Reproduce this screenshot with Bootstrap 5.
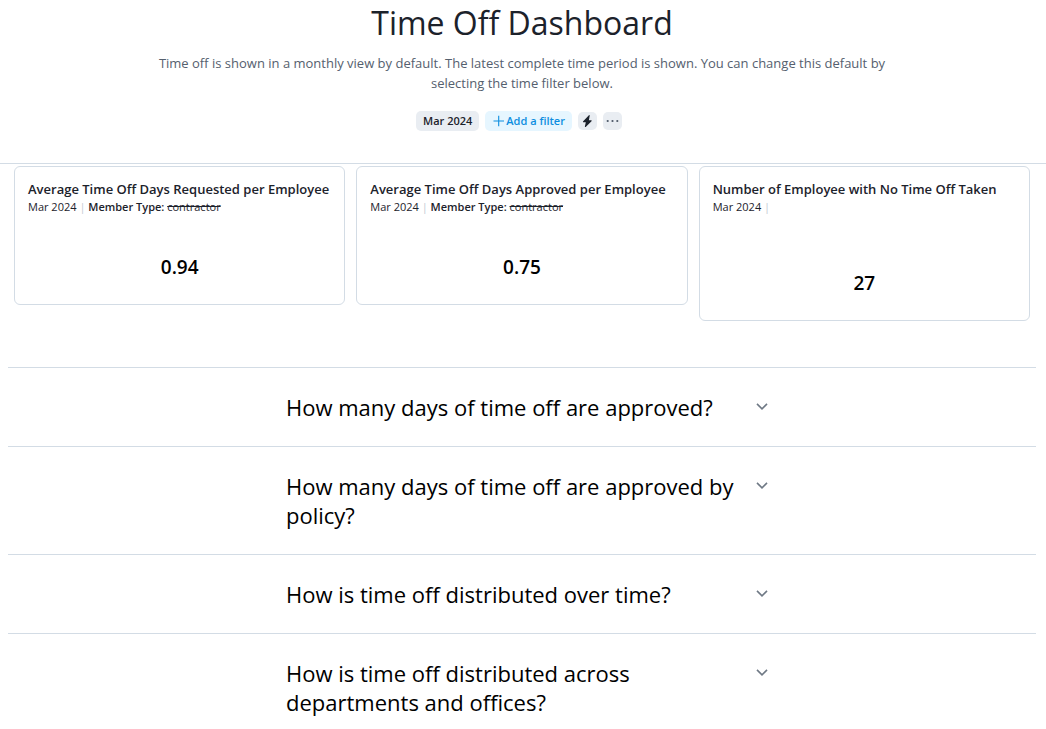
<!DOCTYPE html>
<html lang="en">
<head>
<meta charset="utf-8">
<meta name="viewport" content="width=device-width, initial-scale=1">
<title>Time Off Dashboard</title>
<link href="https://cdn.jsdelivr.net/npm/bootstrap@5.3.0/dist/css/bootstrap.min.css" rel="stylesheet">
<style>
  :root { --line: #d3dce5; --ink: #1c222b; }
  body { font-family: "Open Sans", "Noto Sans", sans-serif; color: var(--ink); background: #fff; }
  .page-head { padding: 0 2px 32px 0; border-bottom: 1px solid var(--line); }
  .page-title { font-size: 32px; line-height: 46px; font-weight: 400; margin-bottom: 7px; }
  .page-note { font-size: 13px; line-height: 20px; color: #55606e; max-width: 740px; margin-bottom: 18px; }
  .filters { gap: 6px; padding-right: 6px; }
  .chip { --bs-btn-padding-x: 7px; --bs-btn-padding-y: 0; --bs-btn-border-width: 0; --bs-btn-border-radius: 5px;
    --bs-btn-bg: #e9edf2; --bs-btn-hover-bg: #dde3ea; --bs-btn-color: #1c222b;
    font-size: 11px; font-weight: 600; line-height: 20px; }
  .chip-add { --bs-btn-bg: #e6f6ff; --bs-btn-hover-bg: #d3efff; --bs-btn-color: #0d8ee0; --bs-btn-hover-color: #0d8ee0; }
  .chip-icon { width: 19px; height: 18px; --bs-btn-padding-x: 0; }
  .stats { padding: 2px 16px 0 14px; gap: 11px; }
  .stat { flex: 1 1 0; min-width: 0; border: 1px solid var(--line); border-radius: 6px; padding: 13px 13px 24px; }
  .stat-title { font-size: 13px; line-height: 18px; font-weight: 600; margin: 0; }
  .stat-meta { font-size: 11px; line-height: 18px; margin-bottom: 38px; }
  .stat-bar { color: #c3cad3; }
  .stat-value { font-size: 19px; line-height: 26px; font-weight: 600; color: #000; }
  .stat-tall .stat-meta { margin-bottom: 54px; }
  .questions { margin: 46px 10px 0 8px; }
  .question { border-top: 1px solid var(--line); padding: 25px 0 24px; }
  .question:last-child { padding-bottom: 0; }
  .question-inner { max-width: 492px; padding-left: 10px; }
  .question-btn { font-size: 22px; line-height: 29px; font-weight: 400; color: #000; }
  .question-btn svg { margin-top: 10px; }
</style>
</head>
<body>
<header class="page-head d-flex flex-column align-items-center text-center">
  <h1 class="page-title">Time Off Dashboard</h1>
  <p class="page-note">Time off is shown in a monthly view by default. The latest complete time period is shown. You can change this default by selecting the time filter below.</p>
  <div class="filters d-flex align-items-center">
    <button type="button" class="btn chip">Mar 2024</button>
    <button type="button" class="btn chip chip-add d-flex align-items-center">
      <svg width="14" height="12" viewBox="0 0 14 12" fill="none" stroke="currentColor" stroke-width="1.1" aria-hidden="true"><path d="M1.500 6H12M6.700 .7V11.3"/></svg>Add a filter
    </button>
    <button type="button" class="btn chip chip-icon d-flex align-items-center justify-content-center" aria-label="Quick actions">
      <svg width="11" height="13" viewBox="0 0 11 13" fill="currentColor" aria-hidden="true"><path d="M6.900.3 1.200 6.200c-.5.5-.2 1.100.4 1.100h2.200L2.900 11.500c-.1.600.4.800.8.400L9.500 6.300c.5-.5.3-1.100-.4-1.100H6.900L7.700.8C7.800.2 7.300-.1 6.900.3z"/></svg>
    </button>
    <button type="button" class="btn chip chip-icon d-flex align-items-center justify-content-center" aria-label="More options">
      <svg width="13" height="4" viewBox="0 0 13 4" fill="#4d5868" aria-hidden="true"><circle cx="1.700" cy="2" r="1.1"/><circle cx="6.500" cy="2" r="1.1"/><circle cx="11.300" cy="2" r="1.1"/></svg>
    </button>
  </div>
</header>

<main>
  <section class="stats d-flex align-items-start">
    <article class="stat">
      <h2 class="stat-title">Average Time Off Days Requested per Employee</h2>
      <div class="stat-meta">Mar 2024 <span class="stat-bar">|</span> <span class="fw-semibold">Member Type:</span> <s>contractor</s></div>
      <div class="stat-value text-center">0.94</div>
    </article>
    <article class="stat">
      <h2 class="stat-title">Average Time Off Days Approved per Employee</h2>
      <div class="stat-meta">Mar 2024 <span class="stat-bar">|</span> <span class="fw-semibold">Member Type:</span> <s>contractor</s></div>
      <div class="stat-value text-center">0.75</div>
    </article>
    <article class="stat stat-tall">
      <h2 class="stat-title">Number of Employee with No Time Off Taken</h2>
      <div class="stat-meta">Mar 2024 <span class="stat-bar">|</span></div>
      <div class="stat-value text-center">27</div>
    </article>
  </section>

  <section class="questions">
    <div class="question"><h2 class="question-inner mx-auto mb-0 d-flex">
      <button type="button" class="question-btn btn border-0 p-0 w-100 d-flex justify-content-between align-items-start gap-3 text-start" aria-expanded="false">How many days of time off are approved?
        <svg class="flex-shrink-0" width="12" height="8" viewBox="0 0 12 8" fill="none" stroke="#6f7985" stroke-width="1.6" aria-hidden="true"><path d="M1 .9 6 5.900 11 .9"/></svg></button></h2></div>
    <div class="question"><h2 class="question-inner mx-auto mb-0 d-flex">
      <button type="button" class="question-btn btn border-0 p-0 w-100 d-flex justify-content-between align-items-start gap-3 text-start" aria-expanded="false">How many days of time off are approved by policy?
        <svg class="flex-shrink-0" width="12" height="8" viewBox="0 0 12 8" fill="none" stroke="#6f7985" stroke-width="1.6" aria-hidden="true"><path d="M1 .9 6 5.900 11 .9"/></svg></button></h2></div>
    <div class="question"><h2 class="question-inner mx-auto mb-0 d-flex">
      <button type="button" class="question-btn btn border-0 p-0 w-100 d-flex justify-content-between align-items-start gap-3 text-start" aria-expanded="false">How is time off distributed over time?
        <svg class="flex-shrink-0" width="12" height="8" viewBox="0 0 12 8" fill="none" stroke="#6f7985" stroke-width="1.6" aria-hidden="true"><path d="M1 .9 6 5.900 11 .9"/></svg></button></h2></div>
    <div class="question"><h2 class="question-inner mx-auto mb-0 d-flex">
      <button type="button" class="question-btn btn border-0 p-0 w-100 d-flex justify-content-between align-items-start gap-3 text-start" aria-expanded="false">How is time off distributed across departments and offices?
        <svg class="flex-shrink-0" width="12" height="8" viewBox="0 0 12 8" fill="none" stroke="#6f7985" stroke-width="1.6" aria-hidden="true"><path d="M1 .9 6 5.900 11 .9"/></svg></button></h2></div>
  </section>
</main>
<script src="https://cdn.jsdelivr.net/npm/bootstrap@5.3.0/dist/js/bootstrap.bundle.min.js"></script>
</body>
</html>
